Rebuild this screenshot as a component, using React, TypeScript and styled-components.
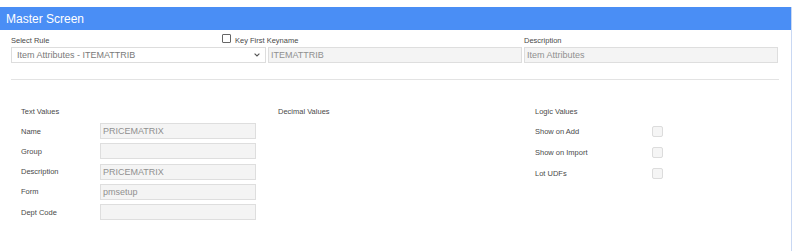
import styled, { createGlobalStyle } from "styled-components";

const GlobalStyle = createGlobalStyle`
  body {
    margin: 0;
    background: #fff;
    font-family: "Liberation Sans", Arial, sans-serif;
  }
`;

const Page = styled.div`
  padding-top: 7px;
`;

const Panel = styled.div`
  width: 792px;
  min-height: 244px;
  box-sizing: border-box;
  border-right: 1px solid #c9d8f3;
`;

const Header = styled.div`
  height: 23px;
  display: flex;
  align-items: center;
  padding-left: 6px;
  background: #4a8ef5;
  color: #fff;
  font-size: 12px;
`;

const Body = styled.div`
  padding: 0 12px 0 11px;
`;

const TopGrid = styled.div`
  display: grid;
  grid-template-columns: 255px 254px 254px;
  column-gap: 2px;
`;

const LabelCell = styled.div`
  height: 17px;
  display: flex;
  align-items: flex-end;
  padding-bottom: 2px;
  box-sizing: border-box;
`;

const Label = styled.span`
  font-size: 7.5px;
  line-height: 9px;
  color: #4a4a4a;
  white-space: nowrap;
`;

const KeyFirst = styled.label`
  display: flex;
  align-items: flex-end;
  gap: 4px;
  margin-left: -46px;
`;

const TinyBox = styled.span`
  width: 9px;
  height: 9px;
  box-sizing: border-box;
  border: 1px solid #666;
  border-radius: 1px;
  background: #fff;
  margin-bottom: 2px;
`;

const SelectBox = styled.div`
  height: 16px;
  display: flex;
  align-items: center;
  justify-content: space-between;
  box-sizing: border-box;
  padding: 0 5px;
  border: 1px solid #ddd;
  background: #fff;
  color: #7a7a7a;
  font-size: 9px;
`;

const Field = styled.div<{ $width?: number }>`
  height: 16px;
  width: ${(p) => (p.$width ? `${p.$width}px` : "auto")};
  display: flex;
  align-items: center;
  box-sizing: border-box;
  padding: 0 2px;
  border: 1px solid #dedede;
  background: #f4f4f4;
  color: #909090;
  font-size: 9px;
  white-space: nowrap;
`;

const Rule = styled.div`
  width: 768px;
  height: 1px;
  margin-top: 16px;
  background: #e3e3e3;
`;

const Sections = styled.div`
  display: grid;
  grid-template-columns: 257px 257px 257px;
  padding-left: 10px;
  margin-top: 27px;
`;

const Column = styled.div`
  display: flex;
  flex-direction: column;
`;

const Heading = styled.div`
  height: 10px;
  margin-bottom: 6px;
  font-size: 7.5px;
  line-height: 10px;
  color: #4a4a4a;
`;

const Rows = styled.div<{ $gap: number }>`
  display: flex;
  flex-direction: column;
  gap: ${(p) => p.$gap}px;
`;

const Row = styled.div<{ $labelWidth: number }>`
  display: grid;
  grid-template-columns: ${(p) => p.$labelWidth}px auto;
  align-items: center;
  height: 16px;
`;

const Check = styled.span`
  width: 11px;
  height: 11px;
  box-sizing: border-box;
  border: 1px solid #dcdcdc;
  border-radius: 2px;
  background: #f5f5f5;
`;

const textValues = [
  { label: "Name", value: "PRICEMATRIX" },
  { label: "Group", value: "" },
  { label: "Description", value: "PRICEMATRIX" },
  { label: "Form", value: "pmsetup" },
  { label: "Dept Code", value: "" },
];

const logicValues = ["Show on Add", "Show on Import", "Lot UDFs"];

function Chevron() {
  return (
    <svg width="6" height="4" viewBox="0 0 6 4">
      <path d="M0.6 0.6 L3 3 L5.4 0.6" fill="none" stroke="#555" strokeWidth="1.1" />
    </svg>
  );
}

export default function App() {
  return (
    <>
      <GlobalStyle />
      <Page>
        <Panel>
          <Header>Master Screen</Header>
          <Body>
            <TopGrid>
              <LabelCell>
                <Label>Select Rule</Label>
              </LabelCell>
              <LabelCell>
                <KeyFirst>
                  <TinyBox />
                  <Label>Key First Keyname</Label>
                </KeyFirst>
              </LabelCell>
              <LabelCell>
                <Label>Description</Label>
              </LabelCell>
              <SelectBox>
                <span>Item Attributes - ITEMATTRIB</span>
                <Chevron />
              </SelectBox>
              <Field>ITEMATTRIB</Field>
              <Field>Item Attributes</Field>
            </TopGrid>
            <Rule />
            <Sections>
              <Column>
                <Heading>Text Values</Heading>
                <Rows $gap={4.25}>
                  {textValues.map((t) => (
                    <Row key={t.label} $labelWidth={79}>
                      <Label>{t.label}</Label>
                      <Field $width={156}>{t.value}</Field>
                    </Row>
                  ))}
                </Rows>
              </Column>
              <Column>
                <Heading>Decimal Values</Heading>
              </Column>
              <Column>
                <Heading>Logic Values</Heading>
                <Rows $gap={5}>
                  {logicValues.map((l) => (
                    <Row key={l} $labelWidth={117}>
                      <Label>{l}</Label>
                      <Check />
                    </Row>
                  ))}
                </Rows>
              </Column>
            </Sections>
          </Body>
        </Panel>
      </Page>
    </>
  );
}
